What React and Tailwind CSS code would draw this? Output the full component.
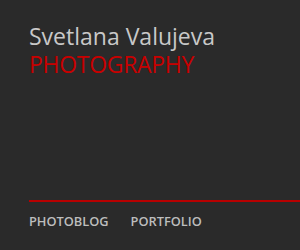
export default function App() {
  return (
    <div className="w-[300px] h-[250px] bg-[#2a2a2a] flex flex-col pl-[29px] overflow-hidden" style={{ fontFamily: '"Open Sans", "Noto Sans", sans-serif' }}>
      <div className="pt-[22px] text-[23px] leading-[28px]">
        <div className="text-[#c8c8c8]">Svetlana Valujeva</div>
        <div className="text-[#c80000] tracking-[-0.3px]">PHOTOGRAPHY</div>
      </div>
      <div className="mt-auto mb-[20px]">
        <div className="h-[2px] bg-[#b80000]" />
        <div className="flex gap-[22px] pt-[10px] text-[12.8px] leading-[18px] font-semibold text-[#bdbdbd]">
          <span>PHOTOBLOG</span>
          <span>PORTFOLIO</span>
        </div>
      </div>
    </div>
  );
}
